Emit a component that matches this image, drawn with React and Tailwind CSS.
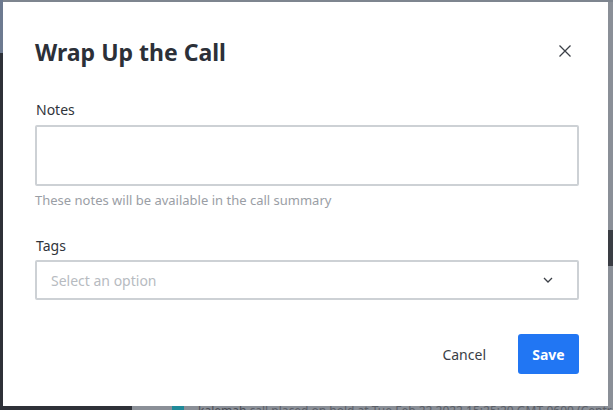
import React from "react";

export default function App() {
  return (
    <div className="relative w-[613px] h-[410px] overflow-hidden bg-[#8a8f97] [font-family:'Noto_Sans','Open_Sans',sans-serif]">
      {/* dimmed app underneath the overlay */}
      <div className="absolute inset-x-0 top-0 h-[2px] bg-[#7e858f]" />
      <div className="absolute left-0 top-0 w-[3px] h-full bg-[#2e3138]" />
      <div className="absolute left-0 top-0 w-[3px] h-[53px] bg-[#6d7a90]" />
      <div className="absolute left-0 bottom-0 w-[132px] h-[4px] bg-[#2e3138]" />
      <div className="absolute left-[172px] bottom-0 flex items-start gap-[14px] h-[6px]">
        <div className="w-[12px] h-[6px] bg-[#1f8a99]" />
        <div className="text-[12px] leading-[14px] text-[#4a4e55] whitespace-nowrap">
          kalemah <span className="text-[#5c6068]">call placed on hold at Tue Feb 22 2022 15:25:20 GMT-0600 (Central S</span>
        </div>
      </div>
      <div className="absolute right-0 top-[230px] w-[5px] h-[36px] bg-[#3a3d44]" />

      {/* modal */}
      <div className="absolute left-[3px] top-[2px] w-[605px] h-[404px] bg-white pl-[32px] pr-[29px] pt-[34px] flex flex-col">
        <div className="flex items-center justify-between h-[32px]">
          <h1 className="text-[23px] font-bold text-[#2c3038] leading-[32px]">Wrap Up the Call</h1>
          <svg width="14" height="14" viewBox="0 0 14 14" className="mr-[7px] mt-[-2px]">
            <path d="M1.5 1.5 L12.5 12.5 M12.5 1.5 L1.5 12.5" stroke="#3c4047" strokeWidth="1.3" fill="none" />
          </svg>
        </div>

        <div className="mt-[32px] flex flex-col gap-[5px]">
          <label className="pl-[1px] text-[14px] leading-[20px] text-[#30343b]">Notes</label>
          <textarea className="block w-full h-[61px] border-2 border-[#cdd1d5] rounded-[2px] resize-none outline-none" />
        </div>
        <div className="mt-[5px] text-[13px] leading-[18px] text-[#9a9ea5]">These notes will be available in the call summary</div>

        <div className="mt-[27px] flex flex-col gap-[4px]">
          <label className="pl-[1px] text-[14px] leading-[20px] text-[#30343b]">Tags</label>
          <div className="flex items-center justify-between h-[40px] border-2 border-[#cdd1d5] rounded-[2px] pl-[14px] pr-[24px]">
            <span className="text-[14px] text-[#b7bbc1]">Select an option</span>
            <svg width="10" height="6" viewBox="0 0 10 6">
              <path d="M1 1 L5 5 L9 1" stroke="#3c4047" strokeWidth="1.3" fill="none" />
            </svg>
          </div>
        </div>

        <div className="mt-[34px] flex items-center justify-end gap-[32px]">
          <button className="text-[14px] text-[#3a3e45]">Cancel</button>
          <button className="w-[61px] h-[40px] rounded-[3px] bg-[#2176f3] text-white text-[14px] font-bold">Save</button>
        </div>
      </div>
    </div>
  );
}
